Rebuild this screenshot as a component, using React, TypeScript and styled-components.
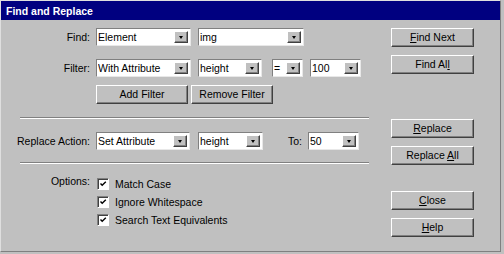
import React from 'react';
import styled, { createGlobalStyle } from 'styled-components';

const Global = createGlobalStyle`
  html, body { margin: 0; padding: 0; background: #c0c0c0; }
  body {
    width: 504px; height: 254px; overflow: hidden;
    font-family: "Liberation Sans", Arial, sans-serif;
    font-size: 10.5px; color: #000;
  }
`;

const Dialog = styled.div`
  width: 501px;
  height: 252px;
  box-sizing: border-box;
  background: #c0c0c0;
  border-left: 1px solid #dfdfdf;
  border-top: 1px solid #dfdfdf;
  border-right: 1px solid #808080;
  border-bottom: 1px solid #808080;
  display: flex;
  flex-direction: column;
`;

const TitleBar = styled.div`
  height: 19px;
  background: #000080;
  color: #fff;
  font-weight: bold;
  font-size: 10.5px;
  padding-left: 5px;
  display: flex;
  align-items: center;
`;

const Body = styled.div`
  display: flex;
  padding-top: 8px;
`;

const LeftPane = styled.div`
  width: 368px;
  display: flex;
  flex-direction: column;
`;

const Row = styled.div<{ $mt?: number }>`
  display: flex;
  align-items: center;
  height: 18px;
  margin-top: ${p => p.$mt ?? 0}px;
`;

const Label = styled.div<{ $dy?: number }>`
  width: 89px;
  text-align: right;
  padding-right: 6px;
  box-sizing: content-box;
  flex-shrink: 0;
  white-space: nowrap;
  position: relative;
  top: ${p => p.$dy ?? 0}px;
`;

const InlineLabel = styled.span<{ $ml: number }>`
  margin-left: ${p => p.$ml}px;
  margin-right: 6px;
`;

const SelectBox = styled.div<{ $w: number; $ml?: number }>`
  width: ${p => p.$w}px;
  height: 18px;
  margin-left: ${p => p.$ml ?? 0}px;
  box-sizing: border-box;
  background: #fff;
  border: 1px solid;
  border-color: #808080 #e8e8e8 #e8e8e8 #808080;
  display: flex;
  align-items: center;
  padding: 0 2px 0 1px;
  flex-shrink: 0;
`;

const SelectText = styled.span`
  flex: 1;
  white-space: nowrap;
  overflow: hidden;
`;

const ArrowBtn = styled.div`
  width: 14px;
  height: 12px;
  box-sizing: border-box;
  background: #c0c0c0;
  border: 1px solid;
  border-color: #fff #404040 #404040 #fff;
  box-shadow: inset -1px -1px #808080;
  display: flex;
  align-items: center;
  justify-content: center;
  &::after {
    content: "";
    width: 0; height: 0;
    border-left: 2.5px solid transparent;
    border-right: 2.5px solid transparent;
    border-top: 3px solid #000;
    margin-top: 1px;
  }
`;

const ButtonRow = styled.div`
  display: flex;
  gap: 3px;
  margin-top: 8px;
  padding-left: 95px;
`;

const Button = styled.div<{ $w?: number }>`
  width: ${p => p.$w ?? 83}px;
  height: 19px;
  box-sizing: border-box;
  background: #c0c0c0;
  border: 1px solid;
  border-color: #fff #404040 #404040 #fff;
  box-shadow: inset -1px -1px #808080;
  display: flex;
  align-items: center;
  justify-content: center;
  white-space: nowrap;
  padding-bottom: 1px;
`;

const Separator = styled.div<{ $mt: number }>`
  margin-top: ${p => p.$mt}px;
  margin-left: 19px;
  width: 349px;
  height: 0;
  border-top: 1px solid #808080;
  border-bottom: 1px solid #fff;
`;

const OptionsBlock = styled.div`
  display: flex;
  margin-top: 14px;
`;

const CheckList = styled.div`
  display: flex;
  flex-direction: column;
  gap: 6px;
`;

const CheckRow = styled.div`
  display: flex;
  align-items: center;
  gap: 6px;
  height: 12px;
  padding-left: 1px;
`;

const Box = styled.div`
  width: 12px;
  height: 12px;
  box-sizing: border-box;
  background: #fff;
  border: 1px solid;
  border-color: #808080 #fff #fff #808080;
  box-shadow: inset 1px 1px #404040;
  display: flex;
  align-items: center;
  justify-content: center;
`;

const RightPane = styled.div`
  margin-left: 22px;
  width: 83px;
  display: flex;
  flex-direction: column;
`;

const ButtonGroup = styled.div<{ $mt?: number }>`
  display: flex;
  flex-direction: column;
  gap: 8px;
  margin-top: ${p => p.$mt ?? 0}px;
`;

const Select = ({ w, ml, text }: { w: number; ml?: number; text: string }) => (
  <SelectBox $w={w} $ml={ml}>
    <SelectText>{text}</SelectText>
    <ArrowBtn />
  </SelectBox>
);

const Check = ({ label }: { label: string }) => (
  <CheckRow>
    <Box>
      <svg width="8" height="8" viewBox="0 0 8 8">
        <path d="M1.5 3.5 L3.2 5.3 L6.8 1.7" stroke="#000" strokeWidth="1.4" fill="none" />
      </svg>
    </Box>
    <span>{label}</span>
  </CheckRow>
);

export default function App() {
  return (
    <>
      <Global />
      <Dialog>
        <TitleBar>Find and Replace</TitleBar>
        <Body>
          <LeftPane>
            <Row>
              <Label>Find:</Label>
              <Select w={95} text="Element" />
              <Select w={106} ml={7} text="img" />
            </Row>
            <Row $mt={13}>
              <Label>Filter:</Label>
              <Select w={95} text="With Attribute" />
              <Select w={64} ml={7} text="height" />
              <Select w={31} ml={10} text="=" />
              <Select w={51} ml={7} text="100" />
            </Row>
            <ButtonRow>
              <Button $w={92}>Add Filter</Button>
              <Button $w={82}>Remove Filter</Button>
            </ButtonRow>
            <Separator $mt={13} />
            <Row $mt={13}>
              <Label>Replace Action:</Label>
              <Select w={94} text="Set Attribute" />
              <Select w={65} ml={8} text="height" />
              <InlineLabel $ml={25}>To:</InlineLabel>
              <Select w={51} text="50" />
            </Row>
            <Separator $mt={12} />
            <OptionsBlock>
              <Label $dy={-3}>Options:</Label>
              <CheckList>
                <Check label="Match Case" />
                <Check label="Ignore Whitespace" />
                <Check label="Search Text Equivalents" />
              </CheckList>
            </OptionsBlock>
          </LeftPane>
          <RightPane>
            <ButtonGroup>
              <Button><span><u>F</u>ind Next</span></Button>
              <Button><span>Find Al<u>l</u></span></Button>
            </ButtonGroup>
            <ButtonGroup $mt={45}>
              <Button><span><u>R</u>eplace</span></Button>
              <Button><span>Replace <u>A</u>ll</span></Button>
            </ButtonGroup>
            <ButtonGroup $mt={26}>
              <Button><span><u>C</u>lose</span></Button>
              <Button><span><u>H</u>elp</span></Button>
            </ButtonGroup>
          </RightPane>
        </Body>
      </Dialog>
    </>
  );
}
